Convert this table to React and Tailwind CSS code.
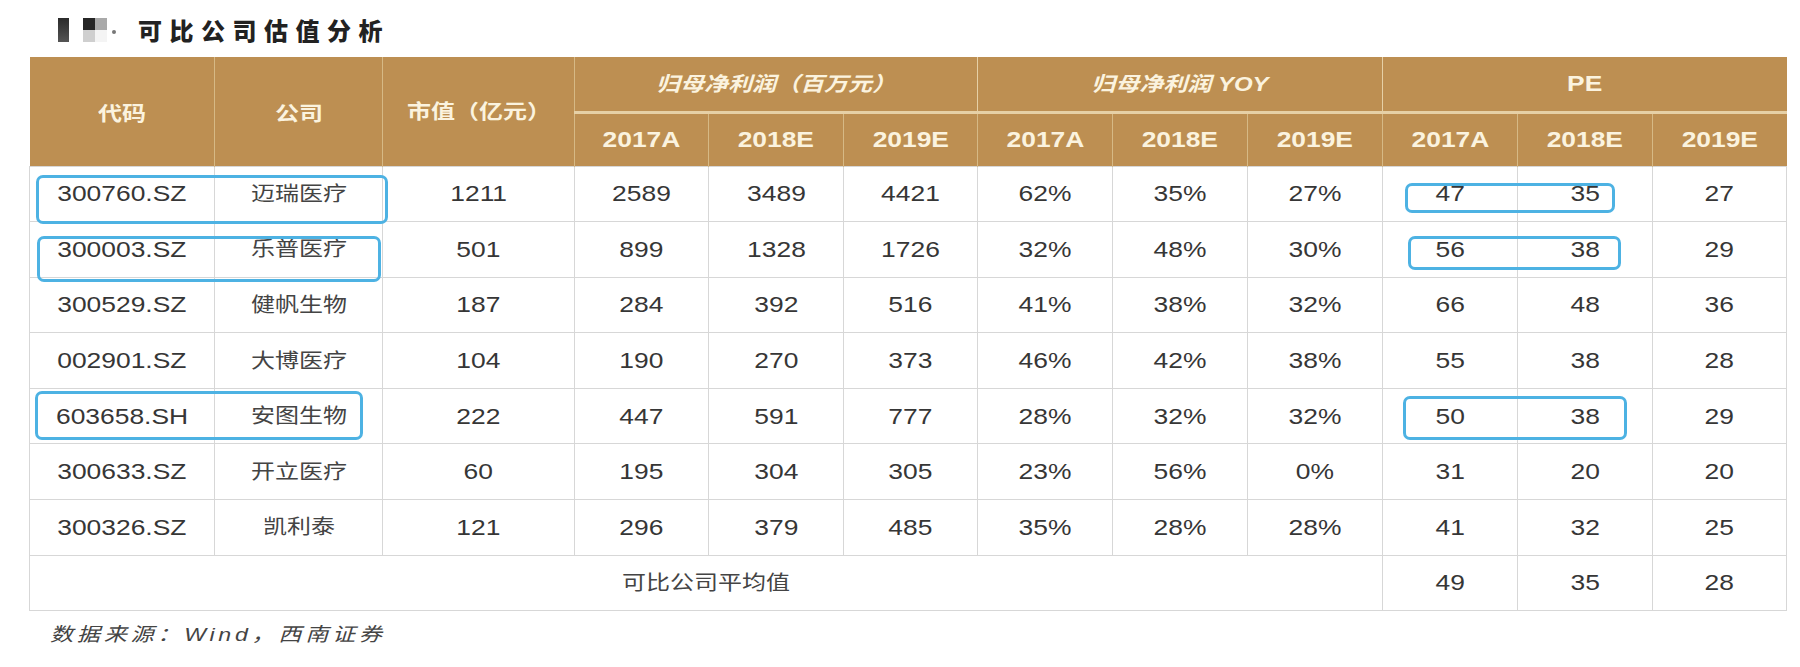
const rows = [
  ['300760.SZ', '迈瑞医疗', '1211', '2589', '3489', '4421', '62%', '35%', '27%', '47', '35', '27'],
  ['300003.SZ', '乐普医疗', '501', '899', '1328', '1726', '32%', '48%', '30%', '56', '38', '29'],
  ['300529.SZ', '健帆生物', '187', '284', '392', '516', '41%', '38%', '32%', '66', '48', '36'],
  ['002901.SZ', '大博医疗', '104', '190', '270', '373', '46%', '42%', '38%', '55', '38', '28'],
  ['603658.SH', '安图生物', '222', '447', '591', '777', '28%', '32%', '32%', '50', '38', '29'],
  ['300633.SZ', '开立医疗', '60', '195', '304', '305', '23%', '56%', '0%', '31', '20', '20'],
  ['300326.SZ', '凯利泰', '121', '296', '379', '485', '35%', '28%', '28%', '41', '32', '25'],
];

const widths = [185, 168, 192, 134, 135, 134, 135, 135, 135, 135, 135, 134];
const years = ['2017A', '2018E', '2019E'];

// wide text, the source picture is stretched sideways
function T({ children, className = '' }) {
  return <span className={`inline-block scale-x-[1.2] ${className}`}>{children}</span>;
}

function Box({ className }) {
  return (
    <div
      className={`absolute rounded-[7px] border-[3px] border-[#4db2e3] pointer-events-none ${className}`}
    />
  );
}

export default function App() {
  return (
    <div className="w-[1800px] h-[667px] bg-white pt-[14px] font-['Liberation_Sans','Noto_Sans_CJK_SC',sans-serif] text-[#363636]">
      {/* Title */}
      <div className="flex items-center h-[32px] pl-[58px]">
        <div className="w-[11px] h-[24px] bg-gradient-to-b from-[#2b2b2b] to-[#555]" />
        <div className="ml-[14px] grid grid-cols-2 w-[24px] h-[24px]">
          <div className="bg-[#262626]" />
          <div className="bg-[#a9a9a9]" />
          <div className="bg-[#cfcfcf]" />
          <div className="bg-[#f4f4f4]" />
        </div>
        <div className="ml-[5px] mt-[4px] w-[4px] h-[4px] rounded-full bg-[#777]" />
        <div className="ml-[22px] text-[24px] font-black tracking-[7.5px] text-[#222] font-['Noto_Sans_CJK_SC',sans-serif]">
          可比公司估值分析
        </div>
      </div>

      {/* Table */}
      <div className="relative ml-[29px] mt-[11px] w-[1757px]">
        <table className="table-fixed border-collapse w-[1757px]">
          <colgroup>
            {widths.map((w, i) => (
              <col key={i} style={{ width: w }} />
            ))}
          </colgroup>
          <thead className="bg-[#bd8f52] text-[#fbf3df]">
            <tr className="h-[55px]">
              <th rowSpan={2} className="border-r border-[#d6b985] text-[20px] font-bold pt-[6px]">
                <T>代码</T>
              </th>
              <th rowSpan={2} className="border-r border-[#d6b985] text-[20px] font-bold pt-[6px]">
                <T>公司</T>
              </th>
              <th rowSpan={2} className="border-r border-[#d6b985] text-[20px] font-bold pt-[2px]">
                <T>市值（亿元）</T>
              </th>
              <th colSpan={3} className="border-r border-b-[3px] border-[#e6d0a6] text-[20px] font-bold italic">
                <T>归母净利润（百万元）</T>
              </th>
              <th colSpan={3} className="border-r border-b-[3px] border-[#e6d0a6] text-[20px] font-bold italic">
                <T>归母净利润 YOY</T>
              </th>
              <th colSpan={3} className="border-b-[3px] border-[#e6d0a6] text-[22px] font-bold">
                <T>PE</T>
              </th>
            </tr>
            <tr className="h-[54px]">
              {[0, 1, 2].map((g) =>
                years.map((y, i) => (
                  <th
                    key={`${g}-${y}`}
                    className={`text-[22px] font-bold ${
                      g === 2 && i === 2 ? '' : 'border-r border-[#d6b985]'
                    }`}
                  >
                    <T>{y}</T>
                  </th>
                ))
              )}
            </tr>
          </thead>
          <tbody>
            {rows.map((r) => (
              <tr key={r[0]} className="h-[55.6px]">
                {r.map((v, i) => (
                  <td
                    key={i}
                    className={`border border-[#d7d7d7] text-center ${
                      i === 1 ? 'text-[20px] text-[#444]' : 'text-[22px]'
                    }`}
                  >
                    <T>{v}</T>
                  </td>
                ))}
              </tr>
            ))}
            <tr className="h-[55.6px]">
              <td colSpan={9} className="border border-[#d7d7d7] text-center text-[20px] text-[#444]">
                <T>可比公司平均值</T>
              </td>
              {['49', '35', '28'].map((v, i) => (
                <td key={i} className="border border-[#d7d7d7] text-center text-[22px]">
                  <T>{v}</T>
                </td>
              ))}
            </tr>
          </tbody>
        </table>

        {/* highlight boxes drawn over the table */}
        <Box className="left-[7px] top-[118px] w-[352px] h-[49px]" />
        <Box className="left-[8px] top-[179px] w-[344px] h-[46px]" />
        <Box className="left-[6px] top-[334px] w-[328px] h-[49px]" />
        <Box className="left-[1376px] top-[126px] w-[210px] h-[30px]" />
        <Box className="left-[1379px] top-[179px] w-[213px] h-[34px]" />
        <Box className="left-[1374px] top-[339px] w-[224px] h-[44px]" />
      </div>

      {/* Source note */}
      <div className="pl-[50px] mt-[10px] text-[19px] italic text-[#444]">
        <span className="inline-block origin-left scale-x-[1.22] tracking-[3px]">数据来源：Wind，西南证券</span>
      </div>
    </div>
  );
}
